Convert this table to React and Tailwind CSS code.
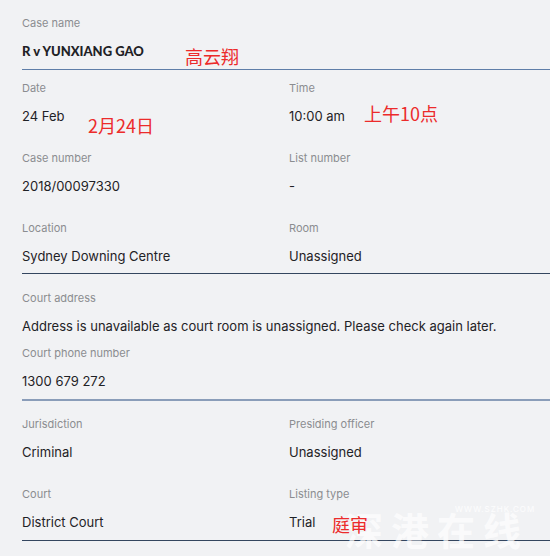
import React from "react";

const font = { fontFamily: "Inter, 'Noto Sans CJK SC', sans-serif" };

function Field({ label, value, bold, note, noteCls, className = "" }) {
  return (
    <div className={className}>
      <div className="text-[11px] leading-[14px] text-[#8b8d90]">{label}</div>
      <div className="relative mt-[11px] text-[13px] leading-[20px] text-[#1f2226]">
        <span
          className={bold ? "font-bold" : ""}
          style={bold ? { fontFamily: "Lato, sans-serif", fontWeight: 900 } : undefined}
        >
          {value}
        </span>
        {note && (
          <span
            className={`absolute z-10 whitespace-nowrap text-[18px] leading-[20px] text-[#ec2b2b] ${noteCls}`}
            style={{ fontFamily: "'Noto Sans CJK SC', sans-serif" }}
          >
            {note}
          </span>
        )}
      </div>
    </div>
  );
}

export default function App() {
  return (
    <div className="relative h-[556px] w-[550px] overflow-hidden bg-[#f1f2f4]" style={font}>
      <div className="pl-[22px]">
        <div className="pt-[16px] pb-[8px]">
          <Field label="Case name" value="R v YUNXIANG GAO" bold note="高云翔" noteCls="left-[163px] top-[5px]" />
        </div>
        <div className="h-px bg-[#5f7ea8]" />
        <div className="grid grid-cols-[267px_1fr] gap-y-[25px] pt-[11px] pb-[7px]">
          <Field label="Date" value="24 Feb" note="2月24日" noteCls="left-[66px] top-[9px]" />
          <Field label="Time" value="10:00 am" note="上午10点" noteCls="left-[75px] top-[-3px]" />
          <Field label="Case number" value="2018/00097330" />
          <Field label="List number" value="-" />
          <Field label="Location" value="Sydney Downing Centre" />
          <Field label="Room" value="Unassigned" />
        </div>
        <div className="h-px bg-[#34465f]" />
        <div className="flex flex-col gap-[10px] pt-[17px] pb-[8px]">
          <Field label="Court address" value="Address is unavailable as court room is unassigned. Please check again later." />
          <Field label="Court phone number" value="1300 679 272" />
        </div>
        <div className="h-[2px] bg-[#8a9db9]" />
        <div className="grid grid-cols-[267px_1fr] gap-y-[25px] pt-[16px] pb-[8px]">
          <Field label="Jurisdiction" value="Criminal" />
          <Field label="Presiding officer" value="Unassigned" />
          <Field label="Court" value="District Court" />
          <Field label="Listing type" value="Trial" note="庭审" noteCls="left-[43px] top-[2px]" />
        </div>
        <div className="h-px bg-[#34465f]" />
      </div>
      <div
        className="pointer-events-none absolute left-[345px] top-[508px] text-[38px] leading-[42px] tracking-[8px] text-white/70"
        style={{ fontFamily: "'Noto Sans CJK SC', sans-serif", fontWeight: 700 }}
      >
        深港在线
      </div>
      <div className="pointer-events-none absolute left-[455px] top-[503px] text-[8px] tracking-[1px] text-white/80">
        WWW.SZHK.COM
      </div>
    </div>
  );
}
